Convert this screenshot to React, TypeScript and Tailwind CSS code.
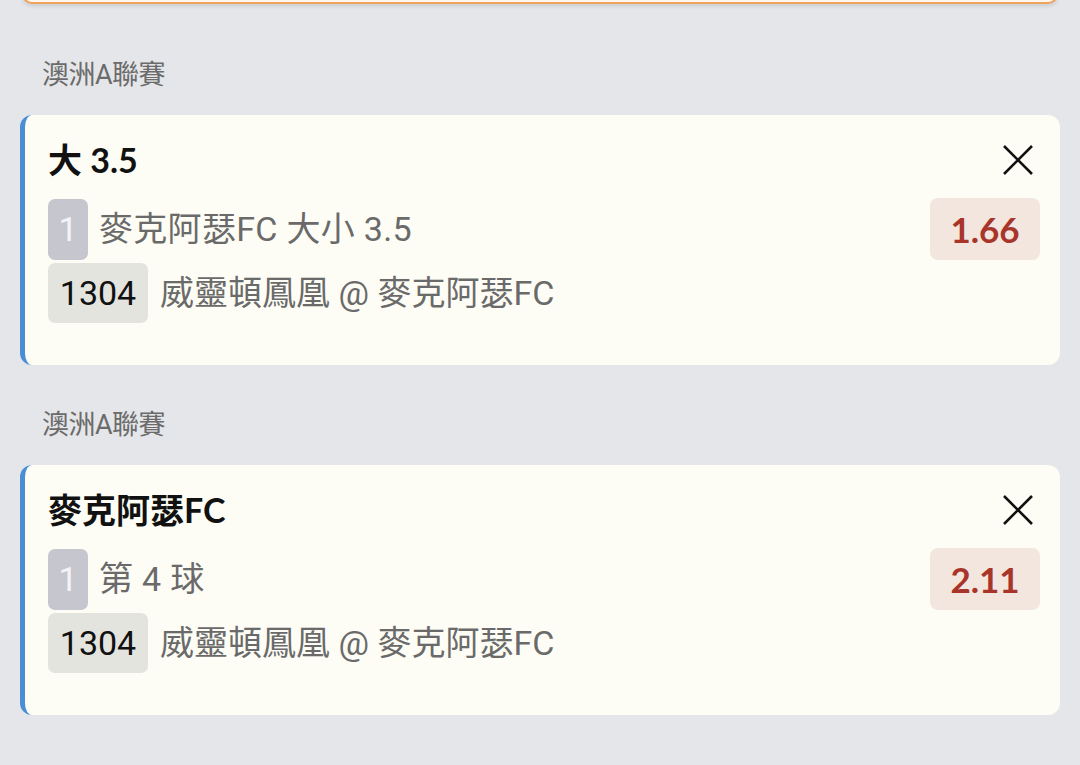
type Bet = {
  league: string;
  title: string;
  line: string;
  odds: string;
  matchNo: string;
  match: string;
};

const bets: Bet[] = [
  {
    league: "澳洲A聯賽",
    title: "大 3.5",
    line: "麥克阿瑟FC 大小 3.5",
    odds: "1.66",
    matchNo: "1304",
    match: "威靈頓鳳凰 @ 麥克阿瑟FC",
  },
  {
    league: "澳洲A聯賽",
    title: "麥克阿瑟FC",
    line: "第 4 球",
    odds: "2.11",
    matchNo: "1304",
    match: "威靈頓鳳凰 @ 麥克阿瑟FC",
  },
];

const bodyFont = "font-['Roboto','Noto_Sans_CJK_TC',sans-serif]";
const titleFont = "font-['Lato','Noto_Sans_CJK_TC',sans-serif]";

function BetCard({ bet }: { bet: Bet }) {
  return (
    <div>
      {/* League header */}
      <div
        className={`${bodyFont} pl-[42px] text-[27px] leading-[24px] text-[#6b6b6b] tracking-[-0.5px] mb-[28px]`}
      >
        {bet.league}
      </div>

      {/* Card */}
      <div className="mx-[20px] h-[250px] rounded-[12px] border-l-[5px] border-[#4a8fd6] bg-[#fdfdf5] pl-[23px] pr-[20px] pt-[27px]">
        <div className="flex items-center justify-between">
          <h3
            className={`${titleFont} text-[34px] leading-[36px] font-bold text-[#111]`}
          >
            {bet.title}
          </h3>
          <button className="mr-[6px] text-[#111]">
            <svg width="32" height="32" viewBox="0 0 32 32">
              <path
                d="M2 2 L30 30 M30 2 L2 30"
                stroke="currentColor"
                strokeWidth="2.6"
                fill="none"
              />
            </svg>
          </button>
        </div>

        <div className="mt-[20px] flex items-center justify-between">
          <div className={`${bodyFont} flex items-center gap-[11px]`}>
            <span className="flex h-[61px] w-[40px] items-center justify-center rounded-[7px] bg-[#c6c6cf] text-[34px] text-[#f4f4f6]">
              1
            </span>
            <span className="text-[34px] text-[#6a6a6a] tracking-[0.3px]">
              {bet.line}
            </span>
          </div>
          <span
            className={`${titleFont} flex h-[62px] w-[110px] items-center justify-center rounded-[8px] bg-[#f3e6df] text-[35px] font-bold text-[#a8352a]`}
          >
            {bet.odds}
          </span>
        </div>

        <div className={`${bodyFont} mt-[3px] flex items-center gap-[12px]`}>
          <span className="flex h-[60px] w-[100px] items-center justify-center rounded-[7px] bg-[#e4e4df] text-[34px] text-[#111]">
            {bet.matchNo}
          </span>
          <span className="text-[34px] text-[#6a6a6a]">{bet.match}</span>
        </div>
      </div>
    </div>
  );
}

export default function App() {
  return (
    <div className="min-h-[765px] w-[1080px] overflow-hidden bg-[#e5e6e9]">
      {/* Cut-off box above */}
      <div className="mx-[22px] -mt-[40px] h-[44px] rounded-b-[10px] border-2 border-[#f0a35e] bg-[#fdf6ec] shadow-[0_2px_4px_rgba(0,0,0,0.12)]"></div>

      <div className="pt-[59px] flex flex-col gap-[48px]">
        {bets.map((bet, i) => (
          <BetCard key={i} bet={bet} />
        ))}
      </div>
    </div>
  );
}
